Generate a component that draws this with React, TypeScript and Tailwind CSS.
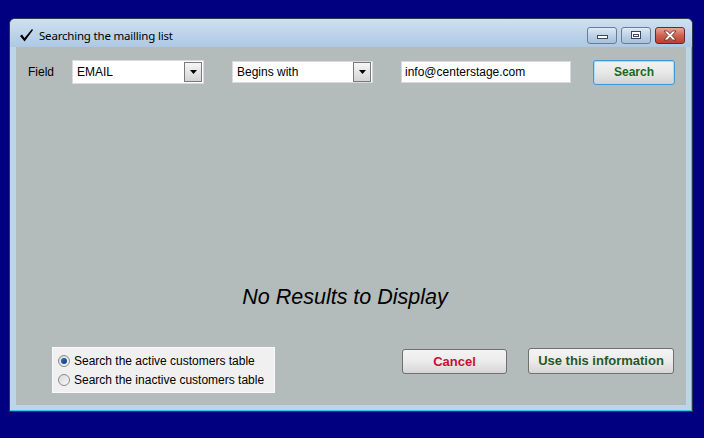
import React, { useState } from 'react';

const ComboArrow: React.FC = () => (
  <div className="w-[18px] h-[20px] border border-[#7a7a7a] bg-gradient-to-b from-[#f6f6f6] to-[#d4d4d4] flex items-center justify-center">
    <svg width="7" height="4" viewBox="0 0 7 4">
      <path d="M0 0 L7 0 L3.5 4 Z" fill="#000" />
    </svg>
  </div>
);

const Radio: React.FC<{ checked: boolean }> = ({ checked }) => (
  <span className="w-[12px] h-[12px] rounded-full border border-[#8a8a8a] bg-gradient-to-br from-[#d8d8d8] to-[#f8f8f8] flex items-center justify-center">
    {checked && <span className="w-[6px] h-[6px] rounded-full bg-gradient-to-br from-[#2f6fb8] to-[#0b3f86]" />}
  </span>
);

const App: React.FC = () => {
  const [active, setActive] = useState(true);

  return (
    <div className="w-[704px] h-[438px] bg-[#000080] pl-[9px] pt-[18px] font-['Liberation_Sans',Arial,sans-serif]">
      {/* window */}
      <div className="w-[684px] h-[394px] flex flex-col rounded-t-[6px] border border-[#2a3a4c] bg-[#bcd4ec] shadow-[inset_-1px_-1px_0_#3cc4e4]">
        {/* title bar */}
        <div className="h-[28px] flex items-center rounded-t-[5px] bg-gradient-to-b from-[#cfe0f1] to-[#aec8e4] pl-[9px] pr-[7px]">
          <svg width="15" height="15" viewBox="0 0 15 15" className="mt-[5px]">
            <path d="M1 8 L3 6.5 L5.5 10 L13 1 L14 2 L5.6 13.5 Z" fill="#000" />
          </svg>
          <span className="ml-[5px] mt-[5px] text-[11.5px] text-black font-['Noto_Sans',sans-serif] tracking-[-0.2px]">
            Searching the mailling list
          </span>
          <div className="ml-auto flex gap-[4px] mt-[4px]">
            <div className="w-[30px] h-[17px] rounded-[3px] border border-[#6a7d93] bg-gradient-to-b from-[#dfeaf6] via-[#bed1e7] to-[#a9c0dc] flex items-center justify-center">
              <span className="w-[11px] h-[4px] mt-[4px] bg-white border border-[#3a4a5c]" />
            </div>
            <div className="w-[30px] h-[17px] rounded-[3px] border border-[#6a7d93] bg-gradient-to-b from-[#dfeaf6] via-[#bed1e7] to-[#a9c0dc] flex items-center justify-center">
              <span className="w-[10px] h-[8px] bg-white border border-[#3a4a5c] flex items-center justify-center">
                <span className="w-[6px] h-[3px] border border-[#3a4a5c]" />
              </span>
            </div>
            <div className="w-[30px] h-[17px] rounded-[3px] border border-[#6b2a22] bg-gradient-to-b from-[#e8a596] via-[#cf6150] to-[#b9402f] flex items-center justify-center">
              <svg width="14" height="11" viewBox="0 0 14 11">
                <path d="M1 1 L4.5 1 L7 3.8 L9.5 1 L13 1 L9 5.5 L13 10 L9.5 10 L7 7.2 L4.5 10 L1 10 L5 5.5 Z" fill="#fff" stroke="#5a2a24" strokeWidth="0.8" />
              </svg>
            </div>
          </div>
        </div>

        {/* client area */}
        <div className="flex-1 mx-[6px] mb-[6px] bg-[#b3bbbb] flex flex-col">
          {/* search row */}
          <div className="mt-[12px] h-[26px] flex items-center text-[12px] text-black">
            <span className="ml-[12px] w-[44px]">Field</span>
            <div className="w-[132px] h-[24px] bg-white border border-[#dadada] flex items-center justify-between pl-[4px] pr-[1px]">
              <span>EMAIL</span>
              <ComboArrow />
            </div>
            <div className="ml-[28px] w-[141px] h-[22px] bg-white border border-[#dadada] flex items-center justify-between pl-[4px] pr-[1px]">
              <span>Begins with</span>
              <ComboArrow />
            </div>
            <div className="ml-[28px] w-[170px] h-[22px] bg-white border border-[#dadada] flex items-center pl-[3px]">
              info@centerstage.com
            </div>
            <button className="ml-[22px] w-[82px] h-[25px] rounded-[3px] border border-[#3c9bd4] shadow-[inset_0_0_0_1px_#a8dcf4] bg-gradient-to-b from-[#f2f2f2] via-[#e8e8e8] to-[#d2d2d2] text-[12px] font-bold text-[#1b6a1b]">
              Search
            </button>
          </div>

          {/* results */}
          <div className="mt-[200px] h-[24px] flex items-center justify-center pr-[12px]">
            <span className="text-[21.5px] italic text-black">No Results to Display</span>
          </div>

          {/* bottom row */}
          <div className="mt-[38px] flex items-start">
            <div className="ml-[36px] w-[223px] h-[46px] bg-[#f0f0f0] border border-[#fafafa] flex flex-col justify-center gap-[6px] pl-[5px] text-[12px] text-black">
              <label className="flex items-center gap-[4px] h-[13px]" onClick={() => setActive(true)}>
                <Radio checked={active} />
                <span>Search the active customers table</span>
              </label>
              <label className="flex items-center gap-[4px] h-[13px]" onClick={() => setActive(false)}>
                <Radio checked={!active} />
                <span>Search the inactive customers table</span>
              </label>
            </div>
            <button className="ml-[127px] mt-[2px] w-[105px] h-[25px] rounded-[3px] border border-[#707070] bg-gradient-to-b from-[#f4f4f4] via-[#ebebeb] to-[#d6d6d6] text-[13px] font-bold text-[#c8102e]">
              Cancel
            </button>
            <button className="ml-[21px] mt-[1px] w-[146px] h-[26px] rounded-[3px] border border-[#707070] bg-gradient-to-b from-[#f4f4f4] via-[#ebebeb] to-[#d6d6d6] text-[13px] font-bold text-[#245a24]">
              Use this information
            </button>
          </div>
        </div>
      </div>
    </div>
  );
};

export default App;
